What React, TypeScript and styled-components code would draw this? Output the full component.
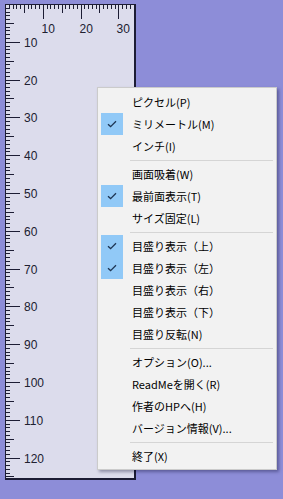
import React, { FC } from 'react';
import styled, { createGlobalStyle } from 'styled-components';

const desktop = '#8d8dd8';
const rulerFace = '#dcdcec';
const ink = '#1c1c34';
const menuFace = '#f2f2f2';
const checkFace = '#91c9f7';

const MM = 3.7795;

const GlobalStyle = createGlobalStyle`
  html, body {
    margin: 0;
    padding: 0;
    background: ${desktop};
  }
  body {
    width: 283px;
    height: 499px;
    overflow: hidden;
  }
`;

const Desktop = styled.div`
  position: relative;
  width: 283px;
  height: 499px;
  padding: 4px 0 0 5px;
  box-sizing: border-box;
`;

const Ruler = styled.div`
  width: 131px;
  height: 476px;
  box-sizing: border-box;
  background: ${rulerFace};
  border-left: 1px solid ${ink};
  border-top: 1px solid ${ink};
  border-right: 2px solid ${ink};
  border-bottom: 2px solid ${ink};
  overflow: hidden;
`;

const Scale = styled.svg`
  display: block;
`;

const ScaleLabel = styled.text`
  font-family: 'Liberation Sans Narrow', 'Liberation Sans', sans-serif;
  font-size: 12px;
  fill: #202030;
`;

const Menu = styled.div`
  position: absolute;
  left: 97px;
  top: 87px;
  width: 180px;
  box-sizing: border-box;
  padding: 3px 2px 2px 2px;
  background: ${menuFace};
  border: 1px solid #cbcbcb;
  box-shadow: 2px 2px 3px rgba(0, 0, 40, 0.35);
  font-family: 'Noto Sans CJK JP', 'Noto Sans', sans-serif;
  font-size: 11px;
  color: #000;
`;

const MenuItem = styled.div`
  display: flex;
  align-items: center;
  height: 22px;
`;

const CheckBox = styled.div<{ $on: boolean }>`
  width: 22px;
  height: 22px;
  margin-left: 1px;
  display: flex;
  align-items: center;
  justify-content: center;
  background: ${(p) => (p.$on ? checkFace : 'transparent')};
`;

const ItemText = styled.span`
  margin-left: 9px;
  white-space: nowrap;
  line-height: 22px;
`;

const Separator = styled.div`
  height: 6px;
  display: flex;
  align-items: center;
  padding-left: 30px;
  padding-right: 1px;

  &::after {
    content: '';
    flex: 1;
    height: 1px;
    background: #d5d5d5;
  }
`;

type Entry = { label: string; checked?: boolean } | 'sep';

const entries: Entry[] = [
  { label: 'ピクセル(P)' },
  { label: 'ミリメートル(M)', checked: true },
  { label: 'インチ(I)' },
  'sep',
  { label: '画面吸着(W)' },
  { label: '最前面表示(T)', checked: true },
  { label: 'サイズ固定(L)' },
  'sep',
  { label: '目盛り表示（上）', checked: true },
  { label: '目盛り表示（左）', checked: true },
  { label: '目盛り表示（右）' },
  { label: '目盛り表示（下）' },
  { label: '目盛り反転(N)' },
  'sep',
  { label: 'オプション(O)...' },
  { label: 'ReadMeを開く(R)' },
  { label: '作者のHPへ(H)' },
  { label: 'バージョン情報(V)...' },
  'sep',
  { label: '終了(X)' },
];

const tickLength = (i: number) => (i % 10 === 0 ? 14 : i % 5 === 0 ? 8 : 4);

const pos = (i: number) => Math.round(i * MM) - 0.5;

const RulerScale: FC = () => {
  const w = 128;
  const h = 473;
  const top = Array.from({ length: 35 }, (_, i) => i);
  const left = Array.from({ length: 126 }, (_, i) => i);

  return (
    <Scale width={w} height={h} viewBox={`0 0 ${w} ${h}`}>
      <g stroke={ink} strokeWidth={1}>
        {top.map((i) => (
          <line key={`t${i}`} x1={pos(i)} y1={0} x2={pos(i)} y2={tickLength(i)} />
        ))}
        {left.map((i) => (
          <line key={`l${i}`} x1={0} y1={pos(i)} x2={tickLength(i)} y2={pos(i)} />
        ))}
      </g>
      {[10, 20, 30].map((n) => (
        <ScaleLabel key={`tl${n}`} x={pos(n) - 2} y={28}>
          {n}
        </ScaleLabel>
      ))}
      {left
        .filter((i) => i > 0 && i % 10 === 0)
        .map((n) => (
          <ScaleLabel key={`ll${n}`} x={18} y={pos(n) + 4.5}>
            {n}
          </ScaleLabel>
        ))}
    </Scale>
  );
};

const CheckMark: FC = () => (
  <svg width="10" height="8" viewBox="0 0 10 8">
    <path d="M1 4.2 L3.6 6.6 L9 1.2" fill="none" stroke="#1e3553" strokeWidth="1.3" />
  </svg>
);

const ContextMenu: FC = () => (
  <Menu>
    {entries.map((entry, index) =>
      entry === 'sep' ? (
        <Separator key={index} />
      ) : (
        <MenuItem key={index}>
          <CheckBox $on={!!entry.checked}>{entry.checked && <CheckMark />}</CheckBox>
          <ItemText>{entry.label}</ItemText>
        </MenuItem>
      ),
    )}
  </Menu>
);

const App: FC = () => (
  <>
    <GlobalStyle />
    <Desktop>
      <Ruler>
        <RulerScale />
      </Ruler>
      <ContextMenu />
    </Desktop>
  </>
);

export default App;
